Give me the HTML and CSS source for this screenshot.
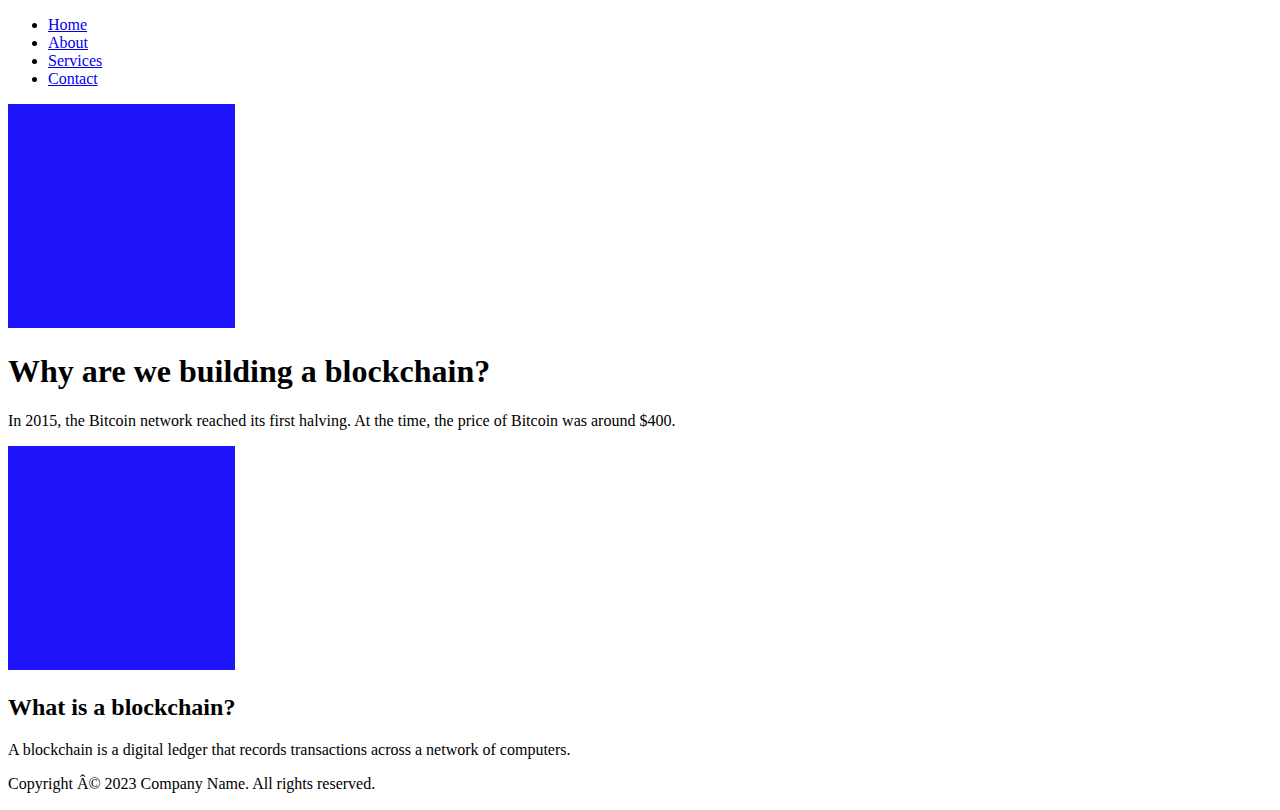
FILE: index.html
```html
<!DOCTYPE html>
<html>
<head>
<meta charset="utf-8">
<title>Blockchain</title>
<link rel="stylesheet" href="styles.css">
</head>
<body>
<nav>
<ul class="nav-list">
<li><a href="#">Home</a></li>
<li><a href="#">About</a></li>
<li><a href="#">Services</a></li>
<li><a href="#">Contact</a></li>
</ul>
</nav>
<main>
<div class="figure"><span class="pic"></span></div>
<h1>Why are we building a blockchain?</h1>
<p>In 2015, the Bitcoin network reached its first halving. At the time, the price of Bitcoin was around $400.</p>
<div class="figure"><span class="pic"></span></div>
<h2>What is a blockchain?</h2>
<p>A blockchain is a digital ledger that records transactions across a network of computers.</p>
</main>
<footer>
<p>Copyright Â© 2023 Company Name. All rights reserved.</p>
</footer>
</body>
</html>
```

FILE: styles.css
```css
html {
  margin: 0;
  padding: 0;
}
body {
  margin: 0 8px 8px;
  padding: 0;
  font-family: "Liberation Serif", "Times New Roman", serif;
  font-size: 16px;
  color: #000;
  background: #fff;
}
.nav-list {
  margin: 16px 0;
  padding-left: 40px;
}
a {
  color: #0000ee;
}
.pic {
  display: inline-block;
  width: 227px;
  height: 224px;
  background: #1e14fa;
}
h1 {
  font-size: 32px;
  margin: 21.44px 0;
}
h2 {
  font-size: 24px;
  margin: 19.92px 0;
}
p {
  margin: 16px 0;
}
```
